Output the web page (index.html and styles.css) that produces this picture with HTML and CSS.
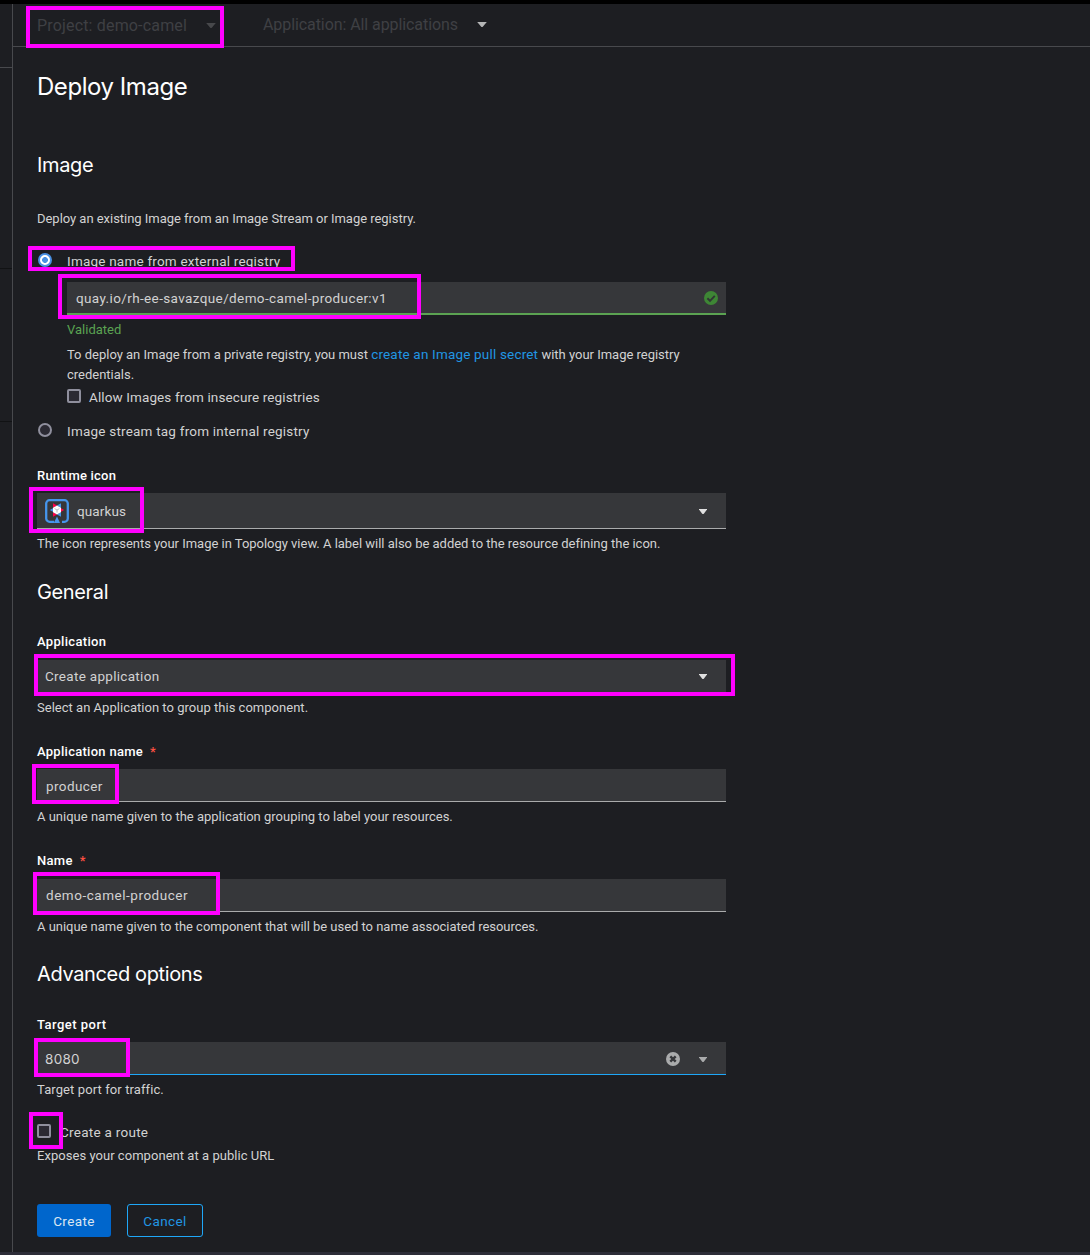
FILE: index.html
```html
<!DOCTYPE html>
<html lang="en">
<head>
<meta charset="utf-8">
<title>Deploy Image</title>
<link rel="stylesheet" href="styles.css">
</head>
<body>
<div class="masthead"></div>
<div class="page">
  <aside class="sidebar">
    <div class="nav-part nav-part-a"></div>
    <div class="nav-part nav-part-b"></div>
    <div class="nav-part nav-part-c"></div>
  </aside>
  <main class="main">
    <header class="context-bar">
      <span class="context project">Project: demo-camel</span>
      <svg class="caret caret-dim" width="10" height="5" viewBox="0 0 10 5"><path d="M.2 0h9.6L6 4.4a1.4 1.4 0 0 1-2 0z"/></svg>
      <span class="context application">Application: All applications</span>
      <svg class="caret caret-app" width="10" height="5" viewBox="0 0 10 5"><path d="M.2 0h9.6L6 4.4a1.4 1.4 0 0 1-2 0z"/></svg>
    </header>
    <form class="form">
      <h1>Deploy Image</h1>

      <section class="image-section">
        <h2>Image</h2>
        <p class="help intro">Deploy an existing Image from an Image Stream or Image registry.</p>
        <div class="radio-row">
          <span class="radio checked"></span>
          <span class="choice">Image name from external registry</span>
        </div>
        <div class="nested">
          <div class="field validated">
            <span class="value image-name">quay.io/rh-ee-savazque/demo-camel-producer:v1</span>
            <svg width="14" height="14" viewBox="0 0 14 14"><circle cx="7" cy="7" r="7" fill="#3e8635"/><path d="M3.4 7.3 6 9.8 10.8 4.8" fill="none" stroke="#303733" stroke-width="1.9"/></svg>
          </div>
          <p class="help success">Validated</p>
          <p class="help private">To deploy an Image from a private registry, you must <a class="link">create an Image pull secret</a> with your Image registry<br>credentials.</p>
          <div class="check-row">
            <span class="checkbox"></span>
            <span class="choice insecure">Allow Images from insecure registries</span>
          </div>
        </div>
        <div class="radio-row internal">
          <span class="radio"></span>
          <span class="choice">Image stream tag from internal registry</span>
        </div>
        <div class="label runtime-label">Runtime icon</div>
        <div class="field select">
          <svg class="quarkus" width="24" height="24" viewBox="0 0 24 24">
            <path d="M9.2 22.8H4.6A3.4 3.4 0 0 1 1.2 19.4V4.6A3.4 3.4 0 0 1 4.6 1.2h14.8A3.4 3.4 0 0 1 22.8 4.6v14.8a3.4 3.4 0 0 1-3.4 3.4H17" fill="none" stroke="#4695eb" stroke-width="2.3"/>
            <path d="M12 17.4 15 24H8.8z" fill="#4695eb"/>
            <path d="M16 4.2 12 6.4l4 2.4zM4.8 11 8.4 9v4zM16 17.8 12 15.6l4-2.4z" fill="#4695eb"/>
            <path d="M8 4.2 12 6.4 8 8.8zM19.2 11 15.6 9v4zM8 17.8l4-2.2-4-2.4z" fill="#ff004a"/>
            <path d="m12 6.4 4 2.3v4.6l-4 2.3-4-2.3V8.7z" fill="#fff"/>
            <path d="M9.6 9.6 12 11l2.4-1.4M12 11v2.6" fill="none" stroke="#a9abb3" stroke-width=".8"/>
          </svg>
          <span class="value quarkus-name">quarkus</span>
          <svg class="caret" width="8" height="5" viewBox="0 0 8 5"><path d="M0 0h8v.6L5 4.4a1.3 1.3 0 0 1-2 0L0 .6z"/></svg>
        </div>
        <p class="help icon-help">The icon represents your Image in Topology view. A label will also be added to the resource defining the icon.</p>
      </section>

      <section class="general-section">
        <h2>General</h2>
        <div class="label application-label">Application</div>
        <div class="field select">
          <span class="value create-application">Create application</span>
          <svg class="caret" width="8" height="5" viewBox="0 0 8 5"><path d="M0 0h8v.6L5 4.4a1.3 1.3 0 0 1-2 0L0 .6z"/></svg>
        </div>
        <p class="help select-help">Select an Application to group this component.</p>
        <div class="label app-name-label">Application name<span class="required">*</span></div>
        <div class="field text"><span class="value app-name">producer</span></div>
        <p class="help">A unique name given to the application grouping to label your resources.</p>
        <div class="label name-label">Name<span class="required">*</span></div>
        <div class="field text"><span class="value component-name">demo-camel-producer</span></div>
        <p class="help name-help">A unique name given to the component that will be used to name associated resources.</p>
      </section>

      <section class="advanced-section">
        <h2>Advanced options</h2>
        <div class="label port-label">Target port</div>
        <div class="field port">
          <span class="value port-value">8080</span>
          <svg class="clear" width="14" height="14" viewBox="0 0 14 14"><circle cx="7" cy="7" r="7" fill="#aaabac"/><path d="m4.3 4.3 5.4 5.4m0-5.4L4.3 9.7" stroke="#36373a" stroke-width="2.4"/></svg>
          <svg class="caret caret-port" width="8" height="5" viewBox="0 0 8 5"><path d="M0 0h8v.6L5 4.4a1.3 1.3 0 0 1-2 0L0 .6z"/></svg>
        </div>
        <p class="help port-help">Target port for traffic.</p>
        <div class="check-row route">
          <span class="checkbox"></span>
          <span class="choice">Create a route</span>
        </div>
        <p class="help route-help">Exposes your component at a public URL</p>
      </section>

      <div class="actions">
        <span class="button primary">Create</span>
        <span class="button secondary">Cancel</span>
      </div>
    </form>
  </main>
</div>
<div class="bottom-edge"></div>

<div class="mark mark-project"></div>
<div class="mark mark-external"></div>
<div class="mark mark-image-name"></div>
<div class="mark mark-runtime"></div>
<div class="mark mark-application"></div>
<div class="mark mark-app-name"></div>
<div class="mark mark-name"></div>
<div class="mark mark-port"></div>
<div class="mark mark-route"></div>
</body>
</html>
```
FILE: styles.css
```css
* { box-sizing: border-box; }

body {
  position: relative;
  display: flex;
  flex-direction: column;
  width: 1090px;
  height: 1255px;
  margin: 0;
  overflow: hidden;
  background: #1d1e22;
  color: #d2d2d2;
  font: 13.5px/20px Roboto, "Liberation Sans", sans-serif;
}

h1, h2, p { margin: 0; }
svg { display: block; flex: none; }

.masthead { height: 4px; background: #000; }
.page { display: flex; height: 1248px; }
.bottom-edge { height: 3px; background: #2d2d38; }

/* navigation edge */
.sidebar { width: 13px; border-right: 1px solid #48494d; }
.nav-part-a { height: 64px; border-bottom: 1px solid #48494d; }
.nav-part-b { height: 201px; border-bottom: 1px solid #111214; }
.nav-part-c { height: 153px; border-bottom: 1px solid #111214; }

.main { flex: 1; }

/* project and application selectors */
.context-bar {
  display: flex;
  align-items: center;
  height: 43px;
  padding-left: 24px;
  border-bottom: 1px solid #48494d;
}
.context { color: #3f4044; font-size: 16px; white-space: nowrap; }
.project { width: 169px; padding-top: 2px; letter-spacing: .17px; }
.application { width: 214px; margin-left: 47px; letter-spacing: -.08px; }
.caret { fill: #e0e0e0; }
.caret-dim { fill: #47484b; margin-top: 1px; }
.caret-app { fill: #b4b5b6; margin-bottom: 2px; }

.form { padding: 25px 24px 0; }

h1, h2 { color: #fff; font-family: Inter, "Liberation Sans", sans-serif; font-weight: 400; }
h1 { font-size: 24px; line-height: 30px; letter-spacing: -.45px; }
h2 { font-size: 20px; line-height: 26px; letter-spacing: -.36px; }

.image-section { padding-top: 50px; }
.general-section { padding-top: 25px; }
.advanced-section { padding-top: 24px; }

.help { margin-top: 5px; font-size: 13px; white-space: nowrap; }
.intro { margin-top: 31px; letter-spacing: -.03px; }
.private { letter-spacing: -.01px; }
.success { color: #5ba352; }
.link { color: #2196e3; font-size: 13.5px; line-height: 1; letter-spacing: .18px; }
.icon-help { letter-spacing: -.02px; }
.name-help { letter-spacing: -.03px; }
.port-help { letter-spacing: .1px; }
.select-help { margin-top: 2px; letter-spacing: .02px; }
.route-help { margin-top: 4px; letter-spacing: .04px; }

.choice { letter-spacing: .21px; }
.insecure { letter-spacing: .11px; }
.radio-row, .check-row { display: flex; }
.radio-row { margin-top: 22px; }
.internal { margin-top: 14px; }
.radio {
  width: 14px;
  height: 14px;
  margin: 2px 15px 0 1px;
  border: 2px solid #8f8f9d;
  border-radius: 50%;
  background: #2b2a33;
}
.radio.checked { border: 2px solid #4a90e2; background: radial-gradient(circle, #4a90e2 0 2.6px, #fff 3.2px); }
.nested { width: 659px; margin-left: 30px; }
.check-row { margin-top: 2px; }
.checkbox {
  width: 14px;
  height: 14px;
  margin: 2px 8px 0 0;
  border: 2px solid #8f8f9d;
  border-radius: 2px;
  background: #2b2a33;
}
.route { margin-top: 22px; }
.route .checkbox { margin-right: 9px; }
.route .choice { letter-spacing: .27px; }

.label { color: #fff; font-size: 13px; font-weight: 500; letter-spacing: .28px; }
.runtime-label { margin-top: 25px; letter-spacing: .22px; }
.application-label { margin-top: 27px; letter-spacing: .32px; }
.app-name-label, .name-label { margin-top: 24px; }
.port-label { margin-top: 28px; letter-spacing: .48px; }
.required { margin-left: 7px; color: #fe5142; }

.field {
  display: flex;
  align-items: center;
  width: 689px;
  height: 33px;
  margin-top: 7px;
  border-bottom: 1px solid #aaabac;
  background: #36373a;
}
.value { flex: 1; padding-top: 1px; }
.validated { width: 659px; margin-top: 11px; padding: 0 8px 0 9px; border-bottom: 2px solid #5ba352; }
.image-name { letter-spacing: .38px; }
.select { height: 36px; padding: 0 19px 0 8px; }
.select .quarkus ~ .caret { margin-top: 2px; }
.application-label + .select { margin-top: 8px; padding-bottom: 3px; }
.select .create-application { padding-top: 0; letter-spacing: .3px; }
.quarkus-name { margin-left: 8px; letter-spacing: .1px; }
.text { padding-left: 9px; }
.app-name { padding-top: 2px; letter-spacing: .4px; }
.name-label + .text { margin-top: 8px; }
.component-name { padding-top: 0; letter-spacing: .53px; }
.port { padding: 0 19px 0 8px; border-bottom-color: #1fa7f8; }
.port-value { padding-top: 2px; font-family: Inter, "Liberation Sans", sans-serif; letter-spacing: .3px; }
.clear { margin: 1px 19px 0 0; }
.caret-port { margin-top: 2px; fill: #aaabac; }

.actions { display: flex; gap: 16px; margin-top: 38px; }
.button { height: 33px; padding-top: 1px; border-radius: 3px; line-height: 33px; text-align: center; letter-spacing: .4px; }
.primary { width: 74px; background: #06c; color: #dce6f2; }
.secondary { width: 76px; border: 1px solid #1fa7f8; line-height: 31px; color: #2196e3; }

/* highlight frames over the form */
.mark { position: absolute; border: 4px solid #f0f; }
.mark-project { left: 26px; top: 6px; width: 198px; height: 42px; }
.mark-external { left: 28px; top: 246px; width: 267px; height: 25px; }
.mark-image-name { left: 58px; top: 274px; width: 363px; height: 45px; }
.mark-runtime { left: 29px; top: 487px; width: 115px; height: 46px; }
.mark-application { left: 34px; top: 654px; width: 701px; height: 42px; }
.mark-app-name { left: 32px; top: 764px; width: 87px; height: 40px; }
.mark-name { left: 33px; top: 872px; width: 187px; height: 43px; }
.mark-port { left: 34px; top: 1038px; width: 96px; height: 39px; }
.mark-route { left: 29px; top: 1112px; width: 34px; height: 37px; }
```
